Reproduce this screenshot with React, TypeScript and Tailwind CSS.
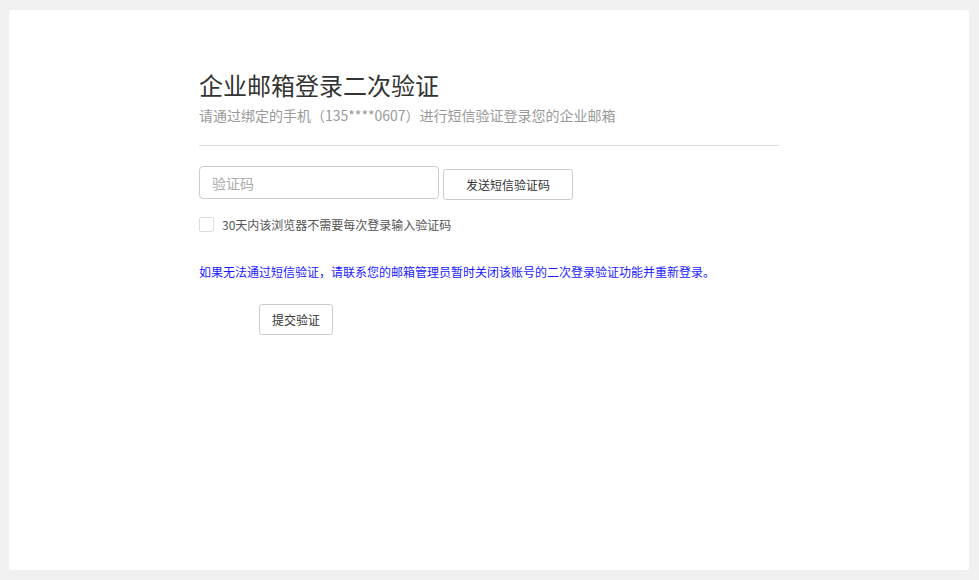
import React from "react";

export default function App() {
  const font = { fontFamily: '"Microsoft YaHei", "Noto Sans CJK SC", "Noto Sans", sans-serif' };
  return (
    <div className="w-[979px] h-[580px] bg-[#f0f0f0] pt-[10px] pl-[9px] pr-[10px] pb-[10px]" style={font}>
      <div className="bg-white h-[560px] rounded-[2px] pl-[190px] pt-[60px]">
        <div className="w-[580px]">
          <h1 className="text-[24px] leading-[30px] text-[#333] font-normal">企业邮箱登录二次验证</h1>
          <p className="text-[14px] leading-[20px] text-[#999] mt-[5px]">请通过绑定的手机（135****0607）进行短信验证登录您的企业邮箱</p>
          <div className="mt-[20px] border-t border-[#ddd]" />
          <div className="flex items-start mt-[20px]">
            <input
              type="text"
              placeholder="验证码"
              className="w-[240px] h-[33px] border border-[#ccc] rounded-[4px] px-[12px] text-[14px] text-[#333] placeholder:text-[#aaa] outline-none"
            />
            <button className="ml-[4px] mt-[3px] w-[130px] h-[31px] border border-[#ccc] rounded-[3px] bg-white text-[12px] text-[#333]">
              发送短信验证码
            </button>
          </div>
          <label className="flex items-center mt-[16px] h-[16px]">
            <span className="w-[15px] h-[15px] border border-[#ddd] rounded-[2px] bg-white" />
            <span className="ml-[8px] text-[12px] leading-[16px] text-[#555] mt-[2px]">30天内该浏览器不需要每次登录输入验证码</span>
          </label>
          <p className="mt-[31px] text-[12px] leading-[18px] text-[#1a1aff]">
            如果无法通过短信验证，请联系您的邮箱管理员暂时关闭该账号的二次登录验证功能并重新登录。
          </p>
          <button className="mt-[23px] ml-[60px] w-[74px] h-[31px] border border-[#ccc] rounded-[3px] bg-white text-[12px] text-[#333]">
            提交验证
          </button>
        </div>
      </div>
    </div>
  );
}
